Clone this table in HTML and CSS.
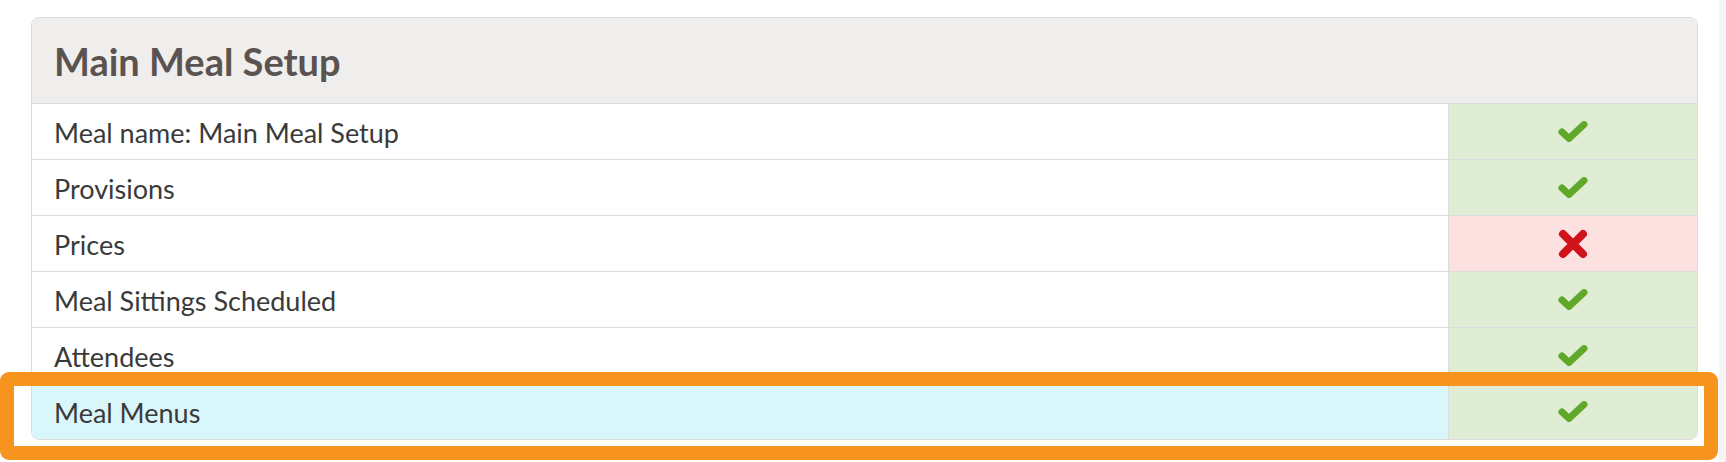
FILE: index.html
```html
<!DOCTYPE html>
<html lang="en">
<head>
<meta charset="utf-8">
<title>Main Meal Setup</title>
<link rel="stylesheet" href="styles.css">
</head>
<body>
<div class="layout">
  <main class="main">
    <section class="panel">
      <header class="panel-head"><h2 class="panel-title">Main Meal Setup</h2></header>
      <div class="row">
        <div class="label">Meal name: Main Meal Setup</div>
        <div class="status ok"><svg class="i-ok" viewBox="0 0 30 21" width="30" height="21"><polyline points="4,11 11,17.5 26,3.5"/></svg></div>
      </div>
      <div class="row">
        <div class="label">Provisions</div>
        <div class="status ok"><svg class="i-ok" viewBox="0 0 30 21" width="30" height="21"><polyline points="4,11 11,17.5 26,3.5"/></svg></div>
      </div>
      <div class="row">
        <div class="label">Prices</div>
        <div class="status bad"><svg class="i-bad" viewBox="0 0 30 30" width="30" height="30"><path d="M5 5 L25 25 M25 5 L5 25"/></svg></div>
      </div>
      <div class="row">
        <div class="label">Meal Sittings Scheduled</div>
        <div class="status ok"><svg class="i-ok" viewBox="0 0 30 21" width="30" height="21"><polyline points="4,11 11,17.5 26,3.5"/></svg></div>
      </div>
      <div class="row">
        <div class="label">Attendees</div>
        <div class="status ok"><svg class="i-ok" viewBox="0 0 30 21" width="30" height="21"><polyline points="4,11 11,17.5 26,3.5"/></svg></div>
      </div>
      <div class="row row-info">
        <div class="label">Meal Menus</div>
        <div class="status ok"><svg class="i-ok" viewBox="0 0 30 21" width="30" height="21"><polyline points="4,11 11,17.5 26,3.5"/></svg></div>
      </div>
    </section>
  </main>
  <aside class="edge"></aside>
</div>
<div class="highlight"></div>
</body>
</html>
```
FILE: styles.css
```css
html, body {
  margin: 0;
  padding: 0;
  background: #ffffff;
}
body {
  font-family: Lato, "Open Sans", sans-serif;
  color: #3b3b3b;
  overflow: hidden;
}
.layout {
  display: flex;
  height: 462px;
}
.main {
  flex: 1;
  padding: 17px 21px 0 31px;
}
.edge {
  width: 7px;
  background: #f5f5f5;
}
.panel {
  border: 1px solid #dcdcdc;
  border-radius: 8px;
  overflow: hidden;
}
.panel-head {
  height: 85px;
  background: #efeeec;
  border-bottom: 1px solid #dcdcdc;
  display: flex;
  align-items: center;
  padding: 0 22px;
}
.panel-title {
  margin: 0;
  font-size: 38px;
  font-weight: 700;
  color: #5a5351;
}
.row {
  display: grid;
  grid-template-columns: 1fr 249px;
  height: 55px;
  border-bottom: 1px solid #dcdcdc;
}
.row:last-child {
  border-bottom: none;
}
.label {
  display: flex;
  align-items: center;
  padding: 2px 22px 0;
  font-size: 27px;
  color: #3a3a3a;
}
.row-info .label {
  background: #d9f6fb;
}
.status {
  border-left: 1px solid #dcdcdc;
  display: flex;
  align-items: center;
  justify-content: center;
}
.status.ok {
  background: #e0edd5;
}
.status.bad {
  background: #fde0e0;
}
.i-ok polyline {
  fill: none;
  stroke: #5fa829;
  stroke-width: 7;
  stroke-linecap: round;
  stroke-linejoin: round;
}
.i-bad path {
  fill: none;
  stroke: #d0121b;
  stroke-width: 8;
  stroke-linecap: round;
}
.highlight {
  position: absolute;
  left: 0;
  top: 372px;
  width: 1718px;
  height: 88px;
  box-sizing: border-box;
  border: 14px solid #f7941e;
  border-radius: 9px;
}
```
